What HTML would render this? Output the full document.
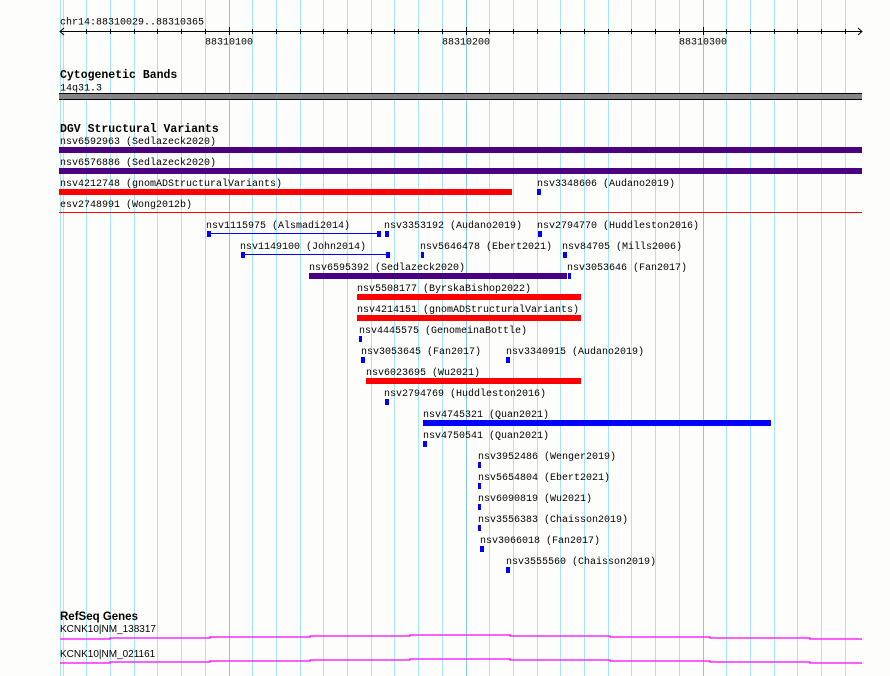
<!DOCTYPE html>
<html><head><meta charset="utf-8"><style>
html,body{margin:0;padding:0;background:#fff;}
svg{display:block}
text{font-family:"Liberation Mono",monospace;font-size:10px;fill:#000}
.b{font-family:"Liberation Mono",monospace;font-weight:bold;font-size:11.5px}
.s{font-family:"Liberation Sans",sans-serif;font-size:10px}
.sb{font-family:"Liberation Sans",sans-serif;font-weight:bold;font-size:11.5px}
</style></head><body>
<svg width="890" height="676" viewBox="0 0 890 676" xmlns="http://www.w3.org/2000/svg">
<rect width="890" height="676" fill="#fdfefb"/>
<g stroke="#a8e6ee" stroke-width="1">
<line x1="60.5" y1="0" x2="60.5" y2="676"/>
<line x1="63.5" y1="0" x2="63.5" y2="676"/>
<line x1="86.5" y1="0" x2="86.5" y2="676"/>
<line x1="110.5" y1="0" x2="110.5" y2="676"/>
<line x1="134.5" y1="0" x2="134.5" y2="676"/>
<line x1="157.5" y1="0" x2="157.5" y2="676"/>
<line x1="181.5" y1="0" x2="181.5" y2="676"/>
<line x1="205.5" y1="0" x2="205.5" y2="676"/>
<line x1="252.5" y1="0" x2="252.5" y2="676"/>
<line x1="276.5" y1="0" x2="276.5" y2="676"/>
<line x1="300.5" y1="0" x2="300.5" y2="676"/>
<line x1="323.5" y1="0" x2="323.5" y2="676"/>
<line x1="347.5" y1="0" x2="347.5" y2="676"/>
<line x1="371.5" y1="0" x2="371.5" y2="676"/>
<line x1="394.5" y1="0" x2="394.5" y2="676"/>
<line x1="418.5" y1="0" x2="418.5" y2="676"/>
<line x1="442.5" y1="0" x2="442.5" y2="676"/>
<line x1="489.5" y1="0" x2="489.5" y2="676"/>
<line x1="513.5" y1="0" x2="513.5" y2="676"/>
<line x1="537.5" y1="0" x2="537.5" y2="676"/>
<line x1="560.5" y1="0" x2="560.5" y2="676"/>
<line x1="584.5" y1="0" x2="584.5" y2="676"/>
<line x1="608.5" y1="0" x2="608.5" y2="676"/>
<line x1="631.5" y1="0" x2="631.5" y2="676"/>
<line x1="655.5" y1="0" x2="655.5" y2="676"/>
<line x1="679.5" y1="0" x2="679.5" y2="676"/>
<line x1="726.5" y1="0" x2="726.5" y2="676"/>
<line x1="750.5" y1="0" x2="750.5" y2="676"/>
<line x1="774.5" y1="0" x2="774.5" y2="676"/>
<line x1="797.5" y1="0" x2="797.5" y2="676"/>
<line x1="821.5" y1="0" x2="821.5" y2="676"/>
<line x1="845.5" y1="0" x2="845.5" y2="676"/>
</g>
<g stroke="#86c8ea" stroke-width="1">
<line x1="229.5" y1="0" x2="229.5" y2="676"/>
<line x1="466.5" y1="0" x2="466.5" y2="676"/>
<line x1="703.5" y1="0" x2="703.5" y2="676"/>
</g>
<text x="60" y="24.5">chr14:88310029..88310365</text>
<g stroke="#000" stroke-width="1" fill="none">
<line x1="60" y1="31.5" x2="862" y2="31.5"/>
<polyline points="64,28 60,31.5 64,35"/>
<polyline points="858,28 862,31.5 858,35"/>
<path d="M86.5 29v5M110.5 29v5M134.5 29v5M157.5 29v5M181.5 29v5M205.5 29v5M252.5 29v5M276.5 29v5M300.5 29v5M323.5 29v5M347.5 29v5M371.5 29v5M394.5 29v5M418.5 29v5M442.5 29v5M489.5 29v5M513.5 29v5M537.5 29v5M560.5 29v5M584.5 29v5M608.5 29v5M631.5 29v5M655.5 29v5M679.5 29v5M726.5 29v5M750.5 29v5M774.5 29v5M797.5 29v5M821.5 29v5M845.5 29v5M229.5 27v8M466.5 27v8M703.5 27v8"/>
</g>
<text x="205" y="44.5">88310100</text>
<text x="442" y="44.5">88310200</text>
<text x="679" y="44.5">88310300</text>
<text class="b" x="60" y="78">Cytogenetic Bands</text>
<text x="60" y="90.5">14q31.3</text>
<rect x="59" y="93" width="803" height="7" fill="#858385"/>
<line x1="59" y1="93.5" x2="862" y2="93.5" stroke="#000"/>
<line x1="59" y1="99.5" x2="862" y2="99.5" stroke="#000"/>
<text class="b" x="60" y="132">DGV Structural Variants</text>
<text x="60" y="144">nsv6592963 (Sedlazeck2020)</text>
<rect x="59" y="147" width="803" height="6" fill="#4b0082"/>
<text x="60" y="165">nsv6576886 (Sedlazeck2020)</text>
<rect x="59" y="168" width="803" height="6" fill="#4b0082"/>
<text x="60" y="186">nsv4212748 (gnomADStructuralVariants)</text>
<rect x="59" y="189" width="453" height="6" fill="#f00"/>
<text x="537" y="186">nsv3348606 (Audano2019)</text>
<rect x="537" y="189" width="4" height="6" fill="#00f"/>
<text x="60" y="207">esv2748991 (Wong2012b)</text>
<rect x="59" y="212" width="803" height="1" fill="#f00"/>

<text x="206" y="228">nsv1115975 (Alsmadi2014)</text>
<rect x="207" y="231" width="4" height="6" fill="#00f"/><rect x="211" y="233" width="166" height="1" fill="#00f"/><rect x="377" y="231" width="4" height="6" fill="#00f"/>
<text x="384" y="228">nsv3353192 (Audano2019)</text>
<rect x="385" y="231" width="4" height="6" fill="#00f"/>
<text x="537" y="228">nsv2794770 (Huddleston2016)</text>
<rect x="538" y="231" width="4" height="6" fill="#00f"/>

<text x="240" y="249">nsv1149100 (John2014)</text>
<rect x="241" y="252" width="4" height="6" fill="#00f"/><rect x="245" y="254" width="141" height="1" fill="#00f"/><rect x="386" y="252" width="4" height="6" fill="#00f"/>
<text x="420" y="249">nsv5646478 (Ebert2021)</text>
<rect x="421" y="252" width="3" height="6" fill="#00f"/>
<text x="562" y="249">nsv84705 (Mills2006)</text>
<rect x="563" y="252" width="4" height="6" fill="#00f"/>

<text x="309" y="270">nsv6595392 (Sedlazeck2020)</text>
<rect x="309" y="273" width="258" height="6" fill="#4b0082"/>
<text x="567" y="270">nsv3053646 (Fan2017)</text>
<rect x="568" y="273" width="3" height="6" fill="#00f"/>

<text x="357" y="291">nsv5508177 (ByrskaBishop2022)</text>
<rect x="357" y="294" width="224" height="6" fill="#f00"/>
<text x="357" y="312">nsv4214151 (gnomADStructuralVariants)</text>
<rect x="357" y="315" width="224" height="6" fill="#f00"/>
<text x="359" y="333">nsv4445575 (GenomeinaBottle)</text>
<rect x="359" y="336" width="3" height="6" fill="#00f"/>
<text x="361" y="354">nsv3053645 (Fan2017)</text>
<rect x="361" y="357" width="4" height="6" fill="#00f"/>
<text x="506" y="354">nsv3340915 (Audano2019)</text>
<rect x="506" y="357" width="4" height="6" fill="#00f"/>
<text x="366" y="375">nsv6023695 (Wu2021)</text>
<rect x="366" y="378" width="215" height="6" fill="#f00"/>
<text x="384" y="396">nsv2794769 (Huddleston2016)</text>
<rect x="385" y="399" width="4" height="6" fill="#00f"/>
<text x="423" y="417">nsv4745321 (Quan2021)</text>
<rect x="423" y="420" width="348" height="6" fill="#00f"/>
<text x="423" y="438">nsv4750541 (Quan2021)</text>
<rect x="423" y="441" width="4" height="6" fill="#00f"/>
<text x="478" y="459">nsv3952486 (Wenger2019)</text>
<rect x="478" y="462" width="3" height="6" fill="#00f"/>
<text x="478" y="480">nsv5654804 (Ebert2021)</text>
<rect x="478" y="483" width="3" height="6" fill="#00f"/>
<text x="478" y="501">nsv6090819 (Wu2021)</text>
<rect x="478" y="504" width="3" height="6" fill="#00f"/>
<text x="478" y="522">nsv3556383 (Chaisson2019)</text>
<rect x="478" y="525" width="3" height="6" fill="#00f"/>
<text x="480" y="543">nsv3066018 (Fan2017)</text>
<rect x="480" y="546" width="4" height="6" fill="#00f"/>
<text x="506" y="564">nsv3555560 (Chaisson2019)</text>
<rect x="506" y="567" width="4" height="6" fill="#00f"/>

<text class="sb" x="60" y="620">RefSeq Genes</text>
<text class="s" x="60" y="632">KCNK10|NM_138317</text>
<polyline fill="none" stroke="#f0f" stroke-width="1.3" points="60,639 110,639 110,638 210,638 210,637 310,637 310,636 410,636 410,635 510,635 510,636 610,636 610,637 710,637 710,638 810,638 810,639 862,639"/>
<text class="s" x="60" y="657">KCNK10|NM_021161</text>
<polyline fill="none" stroke="#f0f" stroke-width="1.3" points="60,663 110,663 110,662 210,662 210,661 310,661 310,660 410,660 410,659 510,659 510,660 610,660 610,661 710,661 710,662 810,662 810,663 862,663"/>
</svg>
</body></html>
